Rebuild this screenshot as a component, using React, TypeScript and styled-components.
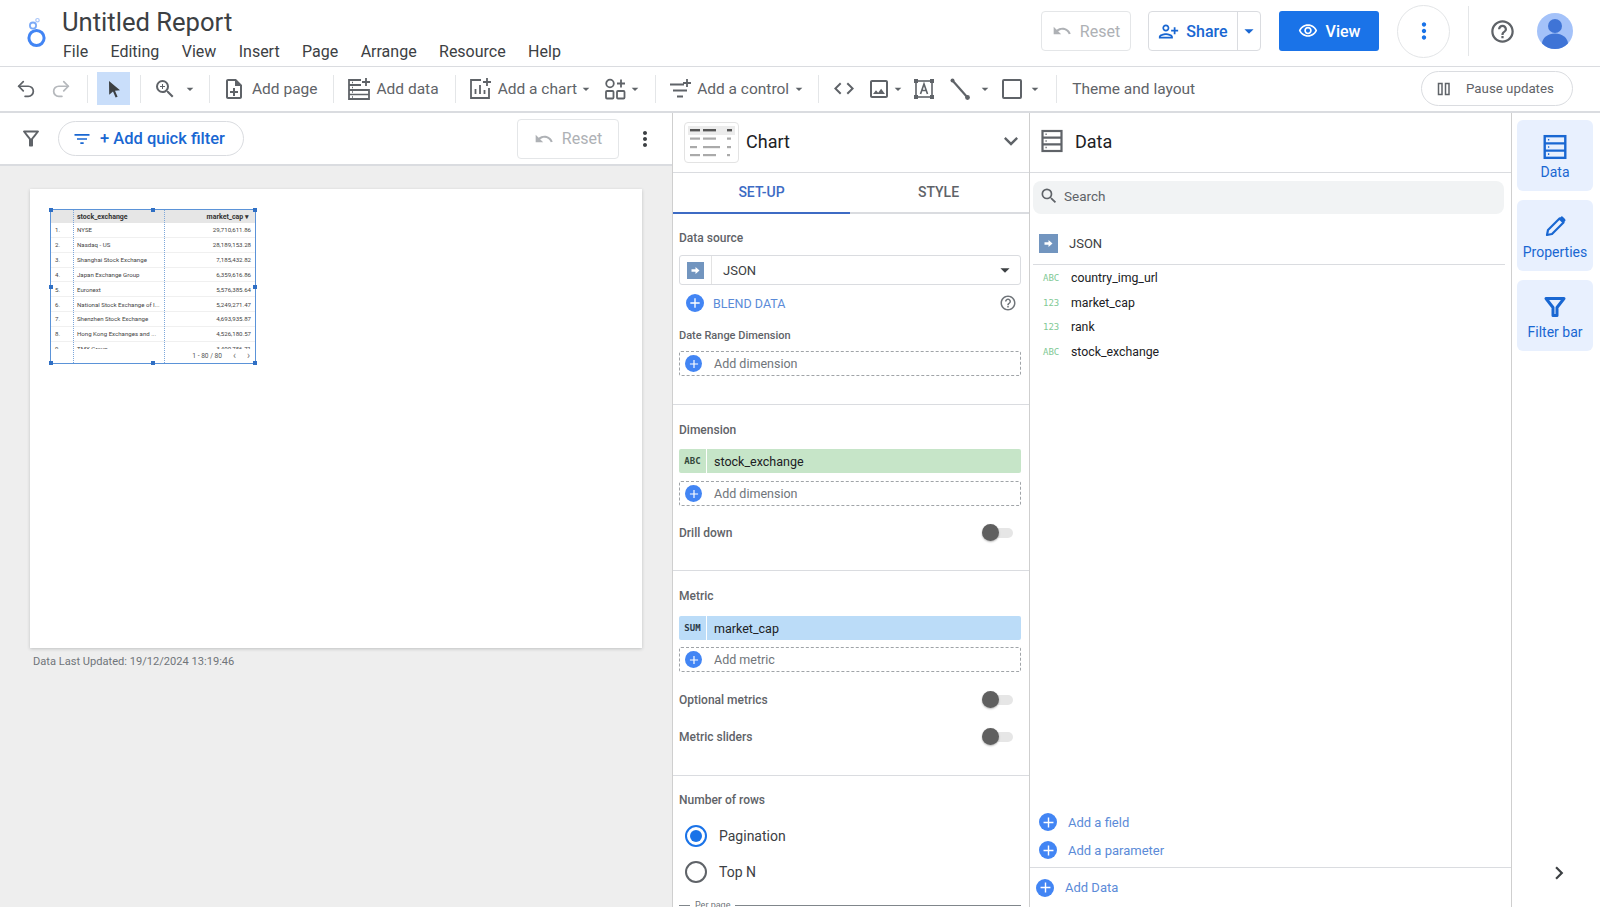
import React from "react";
import styled, { createGlobalStyle } from "styled-components";
import { Undo2, Redo2 } from "lucide-react";
import {
  MdUndo, MdArrowDropDown, MdOutlineNoteAdd, MdCode, MdOutlineImage, MdMoreVert,
  MdPersonAddAlt, MdOutlineVisibility, MdHelpOutline, MdFilterList, MdExpandMore, MdSearch,
  MdChevronRight, MdAdd, MdOutlineFilterAlt, MdZoomIn,
} from "react-icons/md";

const Global = createGlobalStyle`
  html, body { margin: 0; padding: 0; height: 100%; overflow: hidden; background: #fff; }
  body { font-family: Roboto, "Liberation Sans", sans-serif; color: #202124; }
  * { box-sizing: border-box; }
`;

const Page = styled.div`
  width: 1600px; height: 907px; display: flex; flex-direction: column; overflow: hidden;
`;

/* ---------- header ---------- */
const Header = styled.header`
  height: 67px; flex: none; display: flex; align-items: flex-start; border-bottom: 1px solid #dadce0;
  padding-right: 27px;
`;
const LogoSlot = styled.div`width: 62px; height: 66px; flex: none; display: flex; align-items: center; justify-content: center; padding-left: 10px;`;
const TitleCol = styled.div`padding-top: 6px;`;
const Title = styled.div`font-size: 25.6px; line-height: 32px; color: #3c4043;`;
const Menu = styled.nav`display: flex; gap: 22.4px; margin-top: 4px; padding-left: 1px; font-size: 16px; line-height: 20px; color: #3c4043;`;
const HeaderRight = styled.div`margin-left: auto; height: 66px; padding-bottom: 4px; display: flex; align-items: center;`;
const OutlineBtn = styled.div<{ $faded?: boolean; $w: number; $h?: number }>`
  width: ${p => p.$w}px; height: ${p => p.$h ?? 40}px; border: 1px solid #e4e6e8; border-radius: 4px; background: #fff;
  display: flex; align-items: center; justify-content: center; gap: 8px; font-size: 16px; font-weight: 400;
  color: ${p => (p.$faded ? "#aeb1b5" : "#1967d2")};
`;
const ShareBtn = styled.div`
  width: 113px; height: 40px; margin-left: 17px; border: 1px solid #dadce0; border-radius: 4px; display: flex;
  font-size: 16px; color: #1967d2; font-weight: 500;
`;
const ShareMain = styled.div`width: 90px; display: flex; align-items: center; justify-content: center; gap: 7px; border-right: 1px solid #dadce0;`;
const ShareCaret = styled.div`flex: 1; display: flex; align-items: center; justify-content: center;`;
const ViewBtn = styled.div`
  width: 100px; height: 40px; margin-left: 18px; border-radius: 3px; background: #1a73e8; color: #fff;
  display: flex; align-items: center; justify-content: center; gap: 8px; font-size: 16px; font-weight: 500;
`;
const Kebab = styled.div`
  width: 53px; height: 53px; margin-left: 18px; border: 1px solid #e3e5e7; border-radius: 50%; color: #1a73e8;
  display: flex; align-items: center; justify-content: center;
`;
const HeadSep = styled.div`width: 1px; height: 50px; background: #e4e6e8; margin-left: 18px;`;
const HelpSlot = styled.div`margin-left: 19px; width: 28px; height: 28px; color: #5f6368; display: flex; align-items: center; justify-content: center;`;
const Avatar = styled.div`margin-left: 21px; width: 36px; height: 36px; border-radius: 50%; overflow: hidden; flex: none;`;

/* ---------- toolbar ---------- */
const Toolbar = styled.div`
  height: 46px; flex: none; display: flex; align-items: center; padding: 0 0 1px 14px; border-bottom: 2px solid #dadce0; color: #5f6368;
`;
const TIcon = styled.div<{ $ml?: number; $c?: string }>`
  width: 24px; height: 24px; flex: none; margin-left: ${p => p.$ml ?? 0}px; color: ${p => p.$c ?? "#5f6368"};
  display: flex; align-items: center; justify-content: center;
`;
const Caret = styled.div<{ $ml?: number }>`
  width: 16px; height: 16px; flex: none; margin-left: ${p => p.$ml ?? 0}px; color: #5f6368; display: flex; align-items: center; justify-content: center;
`;
const TSep = styled.div<{ $ml?: number }>`width: 1px; height: 28px; flex: none; background: #e4e6e8; margin-left: ${p => p.$ml ?? 0}px;`;
const TText = styled.div<{ $ml?: number }>`font-size: 15.5px; color: #5f6368; white-space: nowrap; margin-left: ${p => p.$ml ?? 0}px;`;
const SelectBtn = styled.div`width: 33px; height: 33px; margin-left: 9px; background: #c9defa; color: #3c4043; display: flex; align-items: center; justify-content: center;`;
const PauseBtn = styled.div`
  margin-left: auto; margin-right: 27px; width: 152px; height: 35px; border: 1px solid #dadce0; border-radius: 18px;
  display: flex; align-items: center; padding-left: 14px; gap: 14px; font-size: 13.3px; color: #5f6368;
`;

/* ---------- body ---------- */
const Body = styled.div`flex: 1; min-height: 0; display: flex;`;
const LeftCol = styled.div`width: 672px; flex: none; display: flex; flex-direction: column;`;
const FilterBar = styled.div`height: 53px; flex: none; display: flex; align-items: center; border-bottom: 2px solid #dadce0; padding-left: 19px;`;
const FunnelSlot = styled.div`width: 24px; height: 24px; color: #5f6368; display: flex; align-items: center; justify-content: center;`;
const QuickChip = styled.div`
  margin-left: 15px; width: 186px; height: 35px; border: 1px solid #dadce0; border-radius: 18px; display: flex; align-items: center;
  padding-left: 13px; gap: 8px; color: #1967d2; font-size: 16.5px; font-weight: 500;
`;
const FilterRight = styled.div`margin-left: auto; display: flex; align-items: center; padding-right: 15px;`;
const KebabPlain = styled.div`margin-left: 14px; width: 24px; height: 24px; color: #3c4043; display: flex; align-items: center; justify-content: center;`;
const Canvas = styled.div`flex: 1; background: #eeeeee; padding: 23px 0 0 30px;`;
const ReportPage = styled.div`width: 612px; height: 459px; background: #fff; padding: 20px 0 0 20px; box-shadow: 0 1px 3px rgba(60,64,67,.25);`;
const Caption = styled.div`margin: 7px 0 0 3px; font-size: 11.1px; line-height: 14px; color: #70757a;`;

/* mini table */
const Selected = styled.div`position: relative; width: 206px; height: 155px; border: 1px solid #5b93d8; display: flex; flex-direction: column;`;
const Handle = styled.span<{ $x: string; $y: string }>`
  position: absolute; left: ${p => p.$x}; top: ${p => p.$y}; width: 4px; height: 4px; margin: -2px 0 0 -2px; background: #2f6fc4;
`;
const Guide = styled.span<{ $x: number }>`position: absolute; top: 0; bottom: 0; left: ${p => p.$x}px; border-left: 1px dotted #7da7da;`;
const THead = styled.div`
  height: 13px; flex: none; background: #e6e6e6; display: grid; grid-template-columns: 22px 91px 1fr; align-items: center;
  font-size: 7px; font-weight: 700; color: #333;
`;
const TRows = styled.div`flex: 1; min-height: 0; overflow: hidden;`;
const TRow = styled.div`
  height: 14.85px; display: grid; grid-template-columns: 22px 91px 1fr; align-items: center; border-bottom: 1px solid #f0f0f0;
  font-size: 6.1px; color: #444;
`;
const CIdx = styled.span`padding-left: 4px;`;
const CName = styled.span`padding-left: 4px; white-space: nowrap; overflow: hidden;`;
const CVal = styled.span`text-align: right; padding-right: 4px;`;
const HSort = styled.span`text-align: right; padding-right: 6px;`;
const TFoot = styled.div`height: 14px; flex: none; display: flex; align-items: center; justify-content: flex-end; gap: 11px; padding-right: 5px; font-size: 6.6px; color: #555; background: #fff;`;
const TArrow = styled.span`font-size: 10px; line-height: 10px; color: #777;`;

/* chart panel */
const ChartPanel = styled.div`
  width: 358px; flex: none; border-left: 1px solid #cfcfcf; border-right: 1px solid #cfcfcf; display: flex; flex-direction: column; overflow: hidden;
`;
const PanelHead = styled.div`height: 60px; flex: none; display: flex; align-items: center; border-bottom: 1px solid #dadce0; padding-bottom: 3px;`;
const Thumb = styled.div`margin: 2px 0 0 11px; width: 55px; height: 41px; border: 1px solid #e3e3e3; border-radius: 4px; display: flex; align-items: center; justify-content: center;`;
const HeadTitle = styled.div<{ $ml: number }>`margin-left: ${p => p.$ml}px; font-size: 18px; color: #202124;`;
const HeadChevron = styled.div`margin-left: auto; margin-right: 4px; width: 28px; height: 28px; color: #5f6368; display: flex; align-items: center; justify-content: center;`;
const Tabs = styled.div`height: 41px; flex: none; display: flex; border-bottom: 2px solid #dadce0;`;
const Tab = styled.div<{ $on?: boolean }>`
  width: 177px; height: 41px; padding-bottom: 2px; display: flex; align-items: center; justify-content: center; font-size: 14px; font-weight: 500;
  color: ${p => (p.$on ? "#3d6bc4" : "#5f6368")}; border-bottom: 2px solid ${p => (p.$on ? "#3d6bc4" : "transparent")};
`;
const Section = styled.section<{ $pt: number; $pb: number; $last?: boolean }>`
  flex: none; padding: ${p => p.$pt}px 8px ${p => p.$pb}px 6px; border-bottom: ${p => (p.$last ? "0" : "1px solid #dadce0")};
`;
const Label = styled.div<{ $mt?: number; $small?: boolean }>`
  font-size: ${p => (p.$small ? 11 : 12)}px; line-height: 16px; font-weight: 500; color: #5f6368; margin-top: ${p => p.$mt ?? 0}px;
`;
const SelectBox = styled.div`height: 30px; margin-top: 9px; border: 1px solid #dadce0; border-radius: 3px; display: flex; align-items: center; color: #3c4043;`;
const SrcSlot = styled.div`width: 32px; height: 100%; border-right: 1px solid #e3e3e3; display: flex; align-items: center; justify-content: center;`;
const SrcIcon = styled.div`width: 17px; height: 17px; background: #7295bf; display: flex; align-items: center; justify-content: center;`;
const SelectText = styled.div`margin-left: 11px; font-size: 13px;`;
const SelectCaret = styled.div`margin-left: auto; margin-right: 4px; width: 22px; height: 22px; display: flex; align-items: center; justify-content: center; color: #3c4043;`;
const BlendRow = styled.div`height: 34px; margin-top: 1px; display: flex; align-items: center; padding-left: 7px; font-size: 12.5px; color: #5b8bd8; gap: 9px;`;
const BlendHelp = styled.div`margin-left: auto; margin-right: 4px; width: 18px; height: 18px; color: #70757a; display: flex; align-items: center; justify-content: center;`;
const PlusDot = styled.div<{ $s?: number }>`
  width: ${p => p.$s ?? 17}px; height: ${p => p.$s ?? 17}px; flex: none; border-radius: 50%; background: #4285f4; color: #fff;
  display: flex; align-items: center; justify-content: center;
`;
const AddBox = styled.div<{ $mt: number }>`
  height: 25px; margin-top: ${p => p.$mt}px; border: 1px dashed #a0a4a8; border-radius: 2px; display: flex; align-items: center; padding-left: 5px; gap: 12px;
  font-size: 12.5px; color: #70757a;
`;
const Pill = styled.div<{ $bg: string; $mt: number }>`
  height: 24px; margin-top: ${p => p.$mt}px; background: ${p => p.$bg}; border-radius: 2px; display: flex; align-items: center; font-size: 12.5px; color: #202124;
`;
const PillTag = styled.div<{ $c: string }>`
  width: 28px; height: 100%; border-right: 1px solid #fff; display: flex; align-items: center; justify-content: center; flex: none;
  font-family: "DejaVu Sans Mono", "Liberation Mono", monospace; font-size: 9px; font-weight: 700; color: ${p => p.$c};
`;
const PillText = styled.div`margin-left: 7px;`;
const SwitchRow = styled.div<{ $mt: number }>`height: 18px; margin-top: ${p => p.$mt}px; display: flex; align-items: center; justify-content: space-between; font-size: 12px; font-weight: 500; color: #5f6368;`;
const Switch = styled.div`position: relative; width: 29px; height: 10px; margin-right: 8px; border-radius: 5px; background: #e6e6e6;`;
const Knob = styled.span`position: absolute; left: -2px; top: -4px; width: 17px; height: 17px; border-radius: 50%; background: #5f5f5f; box-shadow: 0 1px 2px rgba(0,0,0,.3);`;
const RadioRow = styled.div<{ $mt: number }>`height: 22px; margin-top: ${p => p.$mt}px; padding-left: 6px; display: flex; align-items: center; gap: 12px; font-size: 14px; color: #3c4043;`;
const Radio = styled.div<{ $on?: boolean }>`
  width: 22px; height: 22px; border-radius: 50%; border: 2px solid ${p => (p.$on ? "#1a73e8" : "#5f6368")}; display: flex; align-items: center; justify-content: center;
`;
const RadioDot = styled.span`width: 12px; height: 12px; border-radius: 50%; background: #1a73e8;`;
const PerPage = styled.div`margin-top: 16px; display: flex; align-items: center; gap: 5px; font-size: 9px; line-height: 12px; color: #70757a;`;
const PerLine = styled.span<{ $w?: number }>`height: 1px; background: #80868b; ${p => (p.$w ? `width: ${p.$w}px;` : "flex: 1;")}`;

/* data panel */
const DataPanel = styled.div`width: 482px; flex: none; border-right: 1px solid #cfcfcf; display: flex; flex-direction: column;`;
const DataIcon = styled.div`margin-left: 10px; width: 24px; height: 24px; color: #5f6368; display: flex;`;
const Search = styled.div`margin: 8px 7px 0 3px; height: 33px; border-radius: 8px; background: #f1f3f4; display: flex; align-items: center; padding: 0 0 3px 6px; gap: 5px; color: #5f6368; font-size: 13.5px;`;
const JsonRow = styled.div`margin: 0 6px 0 3px; height: 51px; padding: 8px 0 0 6px; border-bottom: 1px solid #dadce0; display: flex; align-items: center; gap: 11px; font-size: 13px; color: #3c4043;`;
const JsonIcon = styled(SrcIcon)`width: 19px; height: 19px;`;
const Fields = styled.div`padding-top: 1px; flex: 1;`;
const Field = styled.div`height: 24.5px; display: flex; align-items: center; padding-left: 13px; font-size: 12.3px; color: #202124;`;
const FieldType = styled.span`width: 28px; font-family: "DejaVu Sans Mono", "Liberation Mono", monospace; font-size: 9px; color: #81c995;`;
const AddLink = styled.div<{ $h?: number }>`height: ${p => p.$h ?? 28}px; display: flex; align-items: center; padding-left: 9px; gap: 11px; font-size: 13px; color: #5b8bd8;`;
const LinkGroup = styled.div`padding-bottom: 3px;`;
const Footer = styled.div`height: 40px; flex: none; border-top: 1px solid #dadce0; display: flex; align-items: center; padding-left: 6px; gap: 11px; font-size: 13px; color: #5b8bd8;`;

/* rail */
const Rail = styled.aside`flex: 1; display: flex; flex-direction: column; align-items: flex-start; padding: 7px 0 20px 5px; gap: 9px;`;
const RailBtn = styled.div`
  width: 76px; height: 71px; padding-top: 3px; border-radius: 6px; background: #e8f0fe; color: #1967d2; display: flex; flex-direction: column; align-items: center; justify-content: center;
  gap: 4px; font-size: 14px; font-weight: 400;
`;
const RailChevron = styled.div`margin: auto 0 0 28px; width: 28px; height: 28px; color: #3c4043; display: flex; align-items: center; justify-content: center;`;

const Logo = () => (
  <svg width="22" height="32" viewBox="0 0 22 32" fill="none">
    <circle cx="11.5" cy="21" r="7.6" stroke="#4285f4" strokeWidth="3" />
    <circle cx="8" cy="8.6" r="3.1" stroke="#7baaf7" strokeWidth="1.8" />
    <circle cx="12.5" cy="3.2" r="1.7" stroke="#a9c6f9" strokeWidth="1.2" />
  </svg>
);
const Cursor = () => (
  <svg width="20" height="20" viewBox="0 0 20 20"><path d="M5 2l11 9.2-5 .6 2.6 6-2 .8-2.6-6-3.8 3.2z" fill="#3c4043" /></svg>
);
const StackIcon = ({ size = 24, w = 2.2 }: { size?: number; w?: number }) => (
  <svg width={size} height={size} viewBox="0 0 24 24" fill="none" stroke="currentColor" strokeWidth={w}>
    <rect x="2.5" y="2" width="19" height="20" />
    <path d="M2.5 8.6h19M2.5 15.3h19" />
    <path d="M5.5 5.3h1.2M5.5 12h1.2M5.5 18.6h1.2" strokeWidth="1.5" />
  </svg>
);
const PencilIcon = () => (
  <svg width="26" height="26" viewBox="0 0 26 26" fill="none">
    <path d="M5 21l1-5L17.5 4.5l4 4L10 20z" stroke="currentColor" strokeWidth="2.2" strokeLinejoin="round" />
    <path d="M17 4.5l1.7-1.6a1.6 1.6 0 0 1 2.3 0l2 2a1.6 1.6 0 0 1 0 2.3l-1.5 1.6z" fill="currentColor" />
  </svg>
);
const FunnelIcon = () => (
  <svg width="26" height="26" viewBox="0 0 26 26" fill="none" stroke="currentColor" strokeWidth="3" strokeLinejoin="round">
    <path d="M4 4.5h18l-7 9v8h-4v-8z" />
  </svg>
);
const AddDataIcon = () => (
  <svg width="24" height="24" viewBox="0 0 24 24" fill="none" stroke="currentColor" strokeWidth="1.8">
    <path d="M14 3H2v19h20v-9H2M2 8h12" />
    <path d="M19 1v8M15 5h8" />
    <path d="M2 17.5h20M5 5.5h1M5 10.5h1M5 15h1M5 20h1" strokeWidth="1.4" />
  </svg>
);
const AddChartIcon = () => (
  <svg width="24" height="24" viewBox="0 0 24 24" fill="none" stroke="currentColor" strokeWidth="1.8">
    <path d="M13 3H3v18h18V11" />
    <path d="M19 1v8M15 5h8M7.5 17v-5M12 17V8M16.5 17v-4" />
  </svg>
);
const ComponentsIcon = () => (
  <svg width="24" height="24" viewBox="0 0 24 24" fill="none" stroke="currentColor" strokeWidth="1.8">
    <circle cx="7" cy="6.5" r="3.8" />
    <path d="M18 2.5v8M14 6.5h8" />
    <rect x="3" y="14" width="7.5" height="7.5" rx="1" />
    <rect x="14" y="14" width="7.5" height="7.5" rx="1" />
  </svg>
);
const ControlIcon = () => (
  <svg width="24" height="24" viewBox="0 0 24 24" fill="none" stroke="currentColor" strokeWidth="1.8">
    <path d="M2 7.5h14M5 13.5h14M9 19.5h6" />
    <path d="M19 2v8M15 6h8" />
  </svg>
);
const TextBoxIcon = () => (
  <svg width="24" height="24" viewBox="0 0 24 24" fill="none" stroke="currentColor" strokeWidth="1.6">
    <rect x="4" y="4" width="16" height="16" />
    <path d="M8.5 17l3.5-10 3.5 10M9.7 13.5h4.6" />
    <g fill="currentColor" stroke="none"><rect x="2" y="2" width="4" height="4" /><rect x="18" y="2" width="4" height="4" /><rect x="2" y="18" width="4" height="4" /><rect x="18" y="18" width="4" height="4" /></g>
  </svg>
);
const LineIcon = () => (
  <svg width="24" height="24" viewBox="0 0 24 24" fill="none" stroke="currentColor" strokeWidth="2.2">
    <path d="M4.5 3.5L19.5 20.5" />
    <circle cx="4.5" cy="3.5" r="2" fill="currentColor" stroke="none" /><circle cx="19.5" cy="20.5" r="2.4" fill="currentColor" stroke="none" />
  </svg>
);
const RectIcon = () => (
  <svg width="24" height="24" viewBox="0 0 24 24" fill="none" stroke="currentColor" strokeWidth="2"><rect x="3" y="3" width="18" height="18" rx="1" /></svg>
);
const PauseIcon = () => (
  <svg width="16" height="16" viewBox="0 0 16 16" fill="none" stroke="#5f6368" strokeWidth="1.5"><rect x="2.5" y="2.5" width="3.5" height="11" /><rect x="9.5" y="2.5" width="3.5" height="11" /></svg>
);
const AvatarArt = () => (
  <svg width="36" height="36" viewBox="0 0 36 36">
    <rect width="36" height="36" fill="#a4c2f9" />
    <circle cx="18" cy="13" r="7" fill="#3f74d6" />
    <ellipse cx="18" cy="31" rx="13" ry="10.5" fill="#3f74d6" />
  </svg>
);
const SrcArrow = () => (
  <svg width="9" height="9" viewBox="0 0 9 9"><path d="M0.5 3.2h4V1l4 3.5-4 3.5V5.8h-4z" fill="#fff" /></svg>
);
const TableThumb = () => (
  <svg width="47" height="33" viewBox="0 0 47 33">
    <rect x="0" y="0" width="47" height="9" fill="#ececec" />
    <g fill="#555"><rect x="2" y="3" width="10" height="2.4" /><rect x="15" y="3" width="13" height="2.4" /><rect x="39" y="3" width="5" height="2.4" /></g>
    <g fill="#aaa">
      <rect x="2" y="11.5" width="10" height="2.2" /><rect x="15" y="11.5" width="13" height="2.2" /><rect x="39" y="11.5" width="4" height="2.2" />
      <rect x="2" y="20" width="7" height="2.2" /><rect x="15" y="20" width="17" height="2.2" /><rect x="39" y="20" width="4" height="2.2" />
      <rect x="2" y="28" width="10" height="2.2" /><rect x="15" y="28" width="13" height="2.2" /><rect x="39" y="28" width="3" height="2.2" />
    </g>
  </svg>
);

const rows: [string, string, string][] = [
  ["1.", "NYSE", "29,710,611.86"],
  ["2.", "Nasdaq - US", "28,189,153.28"],
  ["3.", "Shanghai Stock Exchange", "7,185,432.82"],
  ["4.", "Japan Exchange Group", "6,359,616.86"],
  ["5.", "Euronext", "5,576,385.64"],
  ["6.", "National Stock Exchange of I...", "5,249,271.47"],
  ["7.", "Shenzhen Stock Exchange", "4,693,935.87"],
  ["8.", "Hong Kong Exchanges and ...", "4,526,180.57"],
  ["9.", "TMX Group", "3,400,756.71"],
];
const handles: [string, string][] = [["0%", "0%"], ["50%", "0%"], ["100%", "0%"], ["0%", "50%"], ["100%", "50%"], ["0%", "100%"], ["50%", "100%"], ["100%", "100%"]];
const menu = ["File", "Editing", "View", "Insert", "Page", "Arrange", "Resource", "Help"];
const fields: [string, string][] = [["ABC", "country_img_url"], ["123", "market_cap"], ["123", "rank"], ["ABC", "stock_exchange"]];

const Plus = ({ s = 14 }: { s?: number }) => <MdAdd size={s} />;

export default function App() {
  return (
    <Page>
      <Global />
      <Header>
        <LogoSlot><Logo /></LogoSlot>
        <TitleCol>
          <Title>Untitled Report</Title>
          <Menu>{menu.map(m => <span key={m}>{m}</span>)}</Menu>
        </TitleCol>
        <HeaderRight>
          <OutlineBtn $faded $w={90}><MdUndo size={20} />Reset</OutlineBtn>
          <ShareBtn>
            <ShareMain><MdPersonAddAlt size={21} />Share</ShareMain>
            <ShareCaret><MdArrowDropDown size={22} /></ShareCaret>
          </ShareBtn>
          <ViewBtn><MdOutlineVisibility size={20} />View</ViewBtn>
          <Kebab><MdMoreVert size={26} /></Kebab>
          <HeadSep />
          <HelpSlot><MdHelpOutline size={27} /></HelpSlot>
          <Avatar><AvatarArt /></Avatar>
        </HeaderRight>
      </Header>

      <Toolbar>
        <TIcon><Undo2 size={22} strokeWidth={1.9} /></TIcon>
        <TIcon $ml={11} $c="#b5b8bc"><Redo2 size={22} strokeWidth={1.9} /></TIcon>
        <TSep $ml={14} />
        <SelectBtn><Cursor /></SelectBtn>
        <TSep $ml={10} />
        <TIcon $ml={12}><MdZoomIn size={26} /></TIcon>
        <Caret $ml={5}><MdArrowDropDown size={20} /></Caret>
        <TSep $ml={11} />
        <TIcon $ml={12}><MdOutlineNoteAdd size={28} /></TIcon>
        <TText $ml={6}>Add page</TText>
        <TSep $ml={15} />
        <TIcon $ml={13}><AddDataIcon /></TIcon>
        <TText $ml={6}>Add data</TText>
        <TSep $ml={16} />
        <TIcon $ml={12}><AddChartIcon /></TIcon>
        <TText $ml={6}>Add a chart</TText>
        <Caret $ml={1}><MdArrowDropDown size={20} /></Caret>
        <TIcon $ml={9}><ComponentsIcon /></TIcon>
        <Caret><MdArrowDropDown size={20} /></Caret>
        <TSep $ml={12} />
        <TIcon $ml={12}><ControlIcon /></TIcon>
        <TText $ml={5}>Add a control</TText>
        <Caret $ml={2}><MdArrowDropDown size={20} /></Caret>
        <TSep $ml={11} />
        <TIcon $ml={13}><MdCode size={25} /></TIcon>
        <TIcon $ml={11}><MdOutlineImage size={26} /></TIcon>
        <Caret $ml={-1}><MdArrowDropDown size={20} /></Caret>
        <TIcon $ml={6}><TextBoxIcon /></TIcon>
        <TIcon $ml={12}><LineIcon /></TIcon>
        <Caret $ml={5}><MdArrowDropDown size={20} /></Caret>
        <TIcon $ml={7}><RectIcon /></TIcon>
        <Caret $ml={3}><MdArrowDropDown size={20} /></Caret>
        <TSep $ml={13} />
        <TText $ml={15}>Theme and layout</TText>
        <PauseBtn><PauseIcon />Pause updates</PauseBtn>
      </Toolbar>

      <Body>
        <LeftCol>
          <FilterBar>
            <FunnelSlot><MdOutlineFilterAlt size={29} /></FunnelSlot>
            <QuickChip><MdFilterList size={20} />+ Add quick filter</QuickChip>
            <FilterRight>
              <OutlineBtn $faded $w={102}><MdUndo size={20} />Reset</OutlineBtn>
              <KebabPlain><MdMoreVert size={26} /></KebabPlain>
            </FilterRight>
          </FilterBar>
          <Canvas>
            <ReportPage>
              <Selected>
                <THead><span /><CName>stock_exchange</CName><HSort>market_cap ▾</HSort></THead>
                <TRows>
                  {rows.map(r => (
                    <TRow key={r[0]}><CIdx>{r[0]}</CIdx><CName>{r[1]}</CName><CVal>{r[2]}</CVal></TRow>
                  ))}
                </TRows>
                <TFoot><span>1 - 80 / 80</span><TArrow>‹</TArrow><TArrow>›</TArrow></TFoot>
                <Guide $x={22} />
                <Guide $x={113} />
                {handles.map(h => <Handle key={h.join()} $x={h[0]} $y={h[1]} />)}
              </Selected>
            </ReportPage>
            <Caption>Data Last Updated: 19/12/2024 13:19:46</Caption>
          </Canvas>
        </LeftCol>

        <ChartPanel>
          <PanelHead>
            <Thumb><TableThumb /></Thumb>
            <HeadTitle $ml={7}>Chart</HeadTitle>
            <HeadChevron><MdExpandMore size={28} /></HeadChevron>
          </PanelHead>
          <Tabs><Tab $on>SET-UP</Tab><Tab>STYLE</Tab></Tabs>
          <Section $pt={16} $pb={28}>
            <Label>Data source</Label>
            <SelectBox>
              <SrcSlot><SrcIcon><SrcArrow /></SrcIcon></SrcSlot>
              <SelectText>JSON</SelectText>
              <SelectCaret><MdArrowDropDown size={22} /></SelectCaret>
            </SelectBox>
            <BlendRow><PlusDot $s={18}><Plus s={16} /></PlusDot>BLEND DATA<BlendHelp><MdHelpOutline size={18} /></BlendHelp></BlendRow>
            <Label $mt={8} $small>Date Range Dimension</Label>
            <AddBox $mt={7}><PlusDot><Plus /></PlusDot>Add dimension</AddBox>
          </Section>
          <Section $pt={17} $pb={28}>
            <Label>Dimension</Label>
            <Pill $bg="#c6e5c8" $mt={11}><PillTag $c="#33483a">ABC</PillTag><PillText>stock_exchange</PillText></Pill>
            <AddBox $mt={8}><PlusDot><Plus /></PlusDot>Add dimension</AddBox>
            <SwitchRow $mt={18}>Drill down<Switch><Knob /></Switch></SwitchRow>
          </Section>
          <Section $pt={17} $pb={29}>
            <Label>Metric</Label>
            <Pill $bg="#bbdcf8" $mt={12}><PillTag $c="#2b3b4a">SUM</PillTag><PillText>market_cap</PillText></Pill>
            <AddBox $mt={7}><PlusDot><Plus /></PlusDot>Add metric</AddBox>
            <SwitchRow $mt={19}>Optional metrics<Switch><Knob /></Switch></SwitchRow>
            <SwitchRow $mt={19}>Metric sliders<Switch><Knob /></Switch></SwitchRow>
          </Section>
          <Section $pt={16} $pb={0} $last>
            <Label>Number of rows</Label>
            <RadioRow $mt={17}><Radio $on><RadioDot /></Radio>Pagination</RadioRow>
            <RadioRow $mt={14}><Radio />Top N</RadioRow>
            <PerPage><PerLine $w={11} />Per page<PerLine /></PerPage>
          </Section>
        </ChartPanel>

        <DataPanel>
          <PanelHead>
            <DataIcon><StackIcon /></DataIcon>
            <HeadTitle $ml={11}>Data</HeadTitle>
          </PanelHead>
          <Search><MdSearch size={20} />Search</Search>
          <JsonRow><JsonIcon><SrcArrow /></JsonIcon>JSON</JsonRow>
          <Fields>
            {fields.map(f => <Field key={f[1]}><FieldType>{f[0]}</FieldType>{f[1]}</Field>)}
          </Fields>
          <LinkGroup>
            <AddLink><PlusDot $s={18}><Plus s={17} /></PlusDot>Add a field</AddLink>
            <AddLink><PlusDot $s={18}><Plus s={17} /></PlusDot>Add a parameter</AddLink>
          </LinkGroup>
          <Footer><PlusDot $s={18}><Plus s={17} /></PlusDot>Add Data</Footer>
        </DataPanel>

        <Rail>
          <RailBtn><StackIcon size={26} w={2.2} />Data</RailBtn>
          <RailBtn><PencilIcon />Properties</RailBtn>
          <RailBtn><FunnelIcon />Filter bar</RailBtn>
          <RailChevron><MdChevronRight size={26} /></RailChevron>
        </Rail>
      </Body>
    </Page>
  );
}
